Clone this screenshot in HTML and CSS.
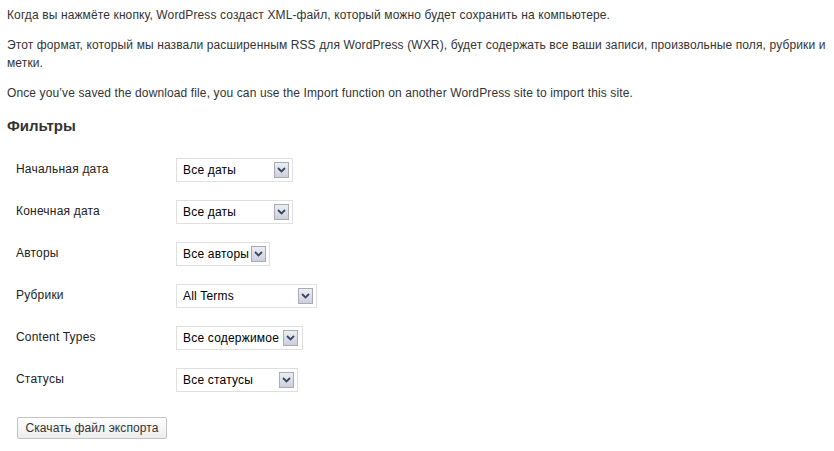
FILE: index.html
```html
<!DOCTYPE html>
<html lang="ru">
<head>
<meta charset="utf-8">
<title>Экспорт</title>
<link rel="stylesheet" href="styles.css">
</head>
<body>
<div class="wrap">
  <p>Когда вы нажмёте кнопку, WordPress создаст XML-файл, который можно будет сохранить на компьютере.</p>
  <p>Этот формат, который мы назвали расширенным RSS для WordPress (WXR), будет содержать все ваши записи, произвольные поля, рубрики и метки.</p>
  <p>Once you’ve saved the download file, you can use the Import function on another WordPress site to import this site.</p>
  <h3>Фильтры</h3>
  <div class="form">
    <div class="row">
      <div class="label">Начальная дата</div>
      <div class="select w117"><span class="val">Все даты</span><span class="arrow"><svg width="9" height="6" viewBox="0 0 9 6"><path d="M1 1 L4.5 4.5 L8 1" fill="none" stroke="#3b4660" stroke-width="1.8"/></svg></span></div>
    </div>
    <div class="row">
      <div class="label">Конечная дата</div>
      <div class="select w117"><span class="val">Все даты</span><span class="arrow"><svg width="9" height="6" viewBox="0 0 9 6"><path d="M1 1 L4.5 4.5 L8 1" fill="none" stroke="#3b4660" stroke-width="1.8"/></svg></span></div>
    </div>
    <div class="row">
      <div class="label">Авторы</div>
      <div class="select"><span class="val">Все авторы</span><span class="arrow"><svg width="9" height="6" viewBox="0 0 9 6"><path d="M1 1 L4.5 4.5 L8 1" fill="none" stroke="#3b4660" stroke-width="1.8"/></svg></span></div>
    </div>
    <div class="row">
      <div class="label">Рубрики</div>
      <div class="select w141"><span class="val">All Terms</span><span class="arrow"><svg width="9" height="6" viewBox="0 0 9 6"><path d="M1 1 L4.5 4.5 L8 1" fill="none" stroke="#3b4660" stroke-width="1.8"/></svg></span></div>
    </div>
    <div class="row">
      <div class="label">Content Types</div>
      <div class="select wide"><span class="val">Все содержимое</span><span class="arrow"><svg width="9" height="6" viewBox="0 0 9 6"><path d="M1 1 L4.5 4.5 L8 1" fill="none" stroke="#3b4660" stroke-width="1.8"/></svg></span></div>
    </div>
    <div class="row">
      <div class="label">Статусы</div>
      <div class="select w122"><span class="val">Все статусы</span><span class="arrow"><svg width="9" height="6" viewBox="0 0 9 6"><path d="M1 1 L4.5 4.5 L8 1" fill="none" stroke="#3b4660" stroke-width="1.8"/></svg></span></div>
    </div>
  </div>
  <div class="submit"><button class="button" type="button">Скачать файл экспорта</button></div>
</div>
</body>
</html>
```
FILE: styles.css
```css
html, body {
  margin: 0;
  padding: 0;
  background: #fff;
}
body {
  font-family: "Liberation Sans", Arial, sans-serif;
  font-size: 12px;
  color: #333;
}
.wrap {
  padding: 6px 7px 0 7px;
  width: 820px;
}
p {
  margin: 0 0 12px 0;
  line-height: 18px;
  letter-spacing: 0.12px;
}
h3 {
  margin: 14px 0 0 0;
  font-size: 15px;
  line-height: 20px;
  font-weight: bold;
  color: #333;
}
.form {
  margin-top: 14px;
  display: flex;
  flex-direction: column;
}
.row {
  display: flex;
  height: 42px;
}
.label {
  width: 169px;
  padding: 10px 0 0 9px;
  line-height: 18px;
  color: #222;
  letter-spacing: 0.2px;
  box-sizing: border-box;
}
.select {
  margin-top: 8px;
  height: 24px;
  box-sizing: border-box;
  border: 1px solid #dfdfdf;
  background: #fff;
  display: flex;
  align-items: center;
  padding: 0 3px 0 6px;
  gap: 2px;
  color: #000;
}
.select .val {
  flex: 1;
  white-space: nowrap;
  line-height: 20px;
  letter-spacing: 0.2px;
}
.w117 { width: 117px; }
.w141 { width: 141px; }
.w122 { width: 122px; }
.wide { gap: 4px; padding-right: 4px; }
.arrow {
  width: 15px;
  height: 16px;
  box-sizing: border-box;
  border: 1px solid #a7abb8;
  background: linear-gradient(#eceef4, #cdd0dc);
  display: flex;
  align-items: center;
  justify-content: center;
  flex: none;
}
.submit {
  padding: 15px 0 0 10px;
}
.button {
  font-family: "Liberation Sans", Arial, sans-serif;
  font-size: 12px;
  color: #333;
  height: 22px;
  width: 150px;
  padding: 0;
  border: 1px solid #c3c3c3;
  border-radius: 2px;
  background: linear-gradient(#ffffff, #ededed);
  line-height: 20px;
  letter-spacing: 0.1px;
}
```
